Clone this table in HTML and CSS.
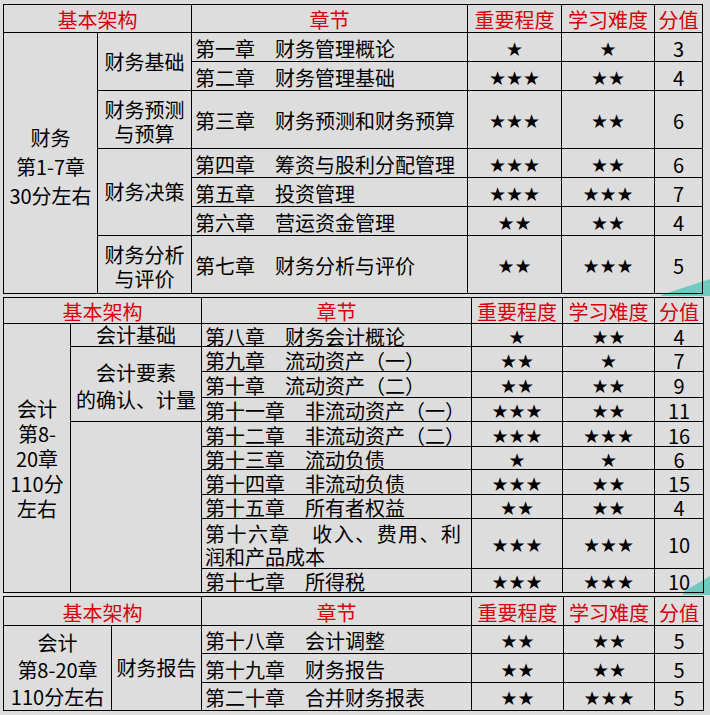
FILE: index.html
```html
<!DOCTYPE html>
<html lang="zh-CN">
<head>
<meta charset="utf-8">
<title>财务管理 / 会计 章节分值</title>
<link rel="stylesheet" href="styles.css">
</head>
<body>
<div class="page">
  <svg class="deco" width="710" height="715" viewBox="0 0 710 715" aria-hidden="true">
    <polygon points="661,295 710,279 710,296 661,296" fill="#6fcbbf"/>
    <polygon points="683,592 710,576 710,595 683,595" fill="#6fcbbf"/>
  </svg>

  <table class="tbl t1">
    <colgroup>
      <col class="c94"><col class="c94"><col class="c276"><col class="c94"><col class="c93"><col class="c48">
    </colgroup>
    <tr class="h28 head">
      <td colspan="2">基本架构</td><td>章节</td><td>重要程度</td><td>学习难度</td><td>分值</td>
    </tr>
    <tr class="h29">
      <td rowspan="7" class="grp l29">财务<br>第1-7章<br>30分左右</td>
      <td rowspan="2" class="grp">财务基础</td>
      <td class="ch">第一章　财务管理概论</td><td class="st">★</td><td class="st">★</td><td class="num">3</td>
    </tr>
    <tr class="h29">
      <td class="ch">第二章　财务管理基础</td><td class="st">★★★</td><td class="st">★★</td><td class="num">4</td>
    </tr>
    <tr class="h58">
      <td class="grp l24">财务预测<br>与预算</td>
      <td class="ch">第三章　财务预测和财务预算</td><td class="st">★★★</td><td class="st">★★</td><td class="num">6</td>
    </tr>
    <tr class="h29">
      <td rowspan="3" class="grp">财务决策</td>
      <td class="ch">第四章　筹资与股利分配管理</td><td class="st">★★★</td><td class="st">★★</td><td class="num">6</td>
    </tr>
    <tr class="h29">
      <td class="ch">第五章　投资管理</td><td class="st">★★★</td><td class="st">★★★</td><td class="num">7</td>
    </tr>
    <tr class="h29">
      <td class="ch">第六章　营运资金管理</td><td class="st">★★</td><td class="st">★★</td><td class="num">4</td>
    </tr>
    <tr class="h58">
      <td class="grp l24">财务分析<br>与评价</td>
      <td class="ch">第七章　财务分析与评价</td><td class="st">★★</td><td class="st">★★★</td><td class="num">5</td>
    </tr>
  </table>

  <table class="tbl t2">
    <colgroup>
      <col class="c67"><col class="c131"><col class="c270"><col class="c91"><col class="c92"><col class="c49">
    </colgroup>
    <tr class="h26 head">
      <td colspan="2">基本架构</td><td>章节</td><td>重要程度</td><td>学习难度</td><td>分值</td>
    </tr>
    <tr class="h23">
      <td rowspan="10" class="grp l25">会计<br>第8-<br>20章<br>110分<br>左右</td>
      <td class="grp">会计基础</td>
      <td class="ch">第八章　财务会计概论</td><td class="st">★</td><td class="st">★★</td><td class="num">4</td>
    </tr>
    <tr class="h25">
      <td rowspan="3" class="grp l27">会计要素<br>的确认、计量</td>
      <td class="ch">第九章　流动资产（一）</td><td class="st">★★</td><td class="st">★</td><td class="num">7</td>
    </tr>
    <tr class="h26">
      <td class="ch">第十章　流动资产（二）</td><td class="st">★★</td><td class="st">★★</td><td class="num">9</td>
    </tr>
    <tr class="h24">
      <td class="ch">第十一章　非流动资产（一）</td><td class="st">★★★</td><td class="st">★★</td><td class="num">11</td>
    </tr>
    <tr class="h25">
      <td rowspan="6" class="grp"></td>
      <td class="ch">第十二章　非流动资产（二）</td><td class="st">★★★</td><td class="st">★★★</td><td class="num">16</td>
    </tr>
    <tr class="h23">
      <td class="ch">第十三章　流动负债</td><td class="st">★</td><td class="st">★</td><td class="num">6</td>
    </tr>
    <tr class="h25">
      <td class="ch">第十四章　非流动负债</td><td class="st">★★★</td><td class="st">★★</td><td class="num">15</td>
    </tr>
    <tr class="h24">
      <td class="ch">第十五章　所有者权益</td><td class="st">★★</td><td class="st">★★</td><td class="num">4</td>
    </tr>
    <tr class="h50">
      <td class="ch wrap">第十六章　收入、费用、利润和产品成本</td><td class="st">★★★</td><td class="st">★★★</td><td class="num">10</td>
    </tr>
    <tr class="h24">
      <td class="ch">第十七章　所得税</td><td class="st">★★★</td><td class="st">★★★</td><td class="num">10</td>
    </tr>
  </table>

  <table class="tbl t3">
    <colgroup>
      <col class="c108"><col class="c90"><col class="c270"><col class="c92"><col class="c91"><col class="c49">
    </colgroup>
    <tr class="h29 head">
      <td colspan="2">基本架构</td><td>章节</td><td>重要程度</td><td>学习难度</td><td>分值</td>
    </tr>
    <tr class="h28">
      <td rowspan="3" class="grp l27">会计<br>第8-20章<br>110分左右</td>
      <td rowspan="3" class="grp">财务报告</td>
      <td class="ch">第十八章　会计调整</td><td class="st">★★</td><td class="st">★★</td><td class="num">5</td>
    </tr>
    <tr class="h29">
      <td class="ch">第十九章　财务报告</td><td class="st">★★</td><td class="st">★★</td><td class="num">5</td>
    </tr>
    <tr class="h28">
      <td class="ch">第二十章　合并财务报表</td><td class="st">★★</td><td class="st">★★★</td><td class="num">5</td>
    </tr>
  </table>
</div>
</body>
</html>
```

FILE: styles.css
```css
html, body {
  margin: 0;
  padding: 0;
  background: #dddddd;
}

.page {
  position: relative;
  width: 710px;
  height: 715px;
  padding: 4px 0 0 3px;
  box-sizing: border-box;
  display: flex;
  flex-direction: column;
  gap: 3px;
  font-family: "Noto Sans CJK SC", "Noto Sans", sans-serif;
  font-size: 20px;
  color: #000;
  overflow: hidden;
}

.deco {
  position: absolute;
  left: 0;
  top: 0;
  z-index: 0;
}

.tbl {
  position: relative;
  z-index: 1;
  border-collapse: collapse;
  table-layout: fixed;
}

.t1 { width: 699px; }
.t2 { width: 700px; }
.t3 { width: 700px; }

.tbl td {
  border: 1px solid #000;
  padding: 3px 2px 0;
  line-height: 18px;
  text-align: center;
  vertical-align: middle;
  white-space: nowrap;
  overflow: visible;
}

.c48 { width: 48px; }
.c49 { width: 49px; }
.c67 { width: 67px; }
.c90 { width: 90px; }
.c91 { width: 91px; }
.c92 { width: 92px; }
.c93 { width: 93px; }
.c94 { width: 94px; }
.c108 { width: 108px; }
.c131 { width: 131px; }
.c270 { width: 270px; }
.c276 { width: 276px; }

.h23 { height: 23px; }
.h24 { height: 24px; }
.h25 { height: 25px; }
.h26 { height: 26px; }
.h28 { height: 28px; }
.h29 { height: 29px; }
.h50 { height: 50px; }
.h58 { height: 58px; }

.head td {
  color: #d8000a;
}

.tbl td.ch {
  text-align: left;
  padding-left: 3px;
}

.tbl td.wrap {
  white-space: normal;
  text-align: justify;
  line-height: 23px;
  padding-right: 10px;
}

.tbl td.grp {
  white-space: normal;
  padding-top: 0;
}

.tbl td.l24 { line-height: 24px; padding-top: 4px; }
.tbl td.l25 { line-height: 25px; }
.tbl td.l27 { line-height: 27px; padding-top: 3px; }
.tbl td.l29 { line-height: 29px; padding-top: 6px; }

.tbl td.st {
  font-family: "DejaVu Sans", sans-serif;
  font-size: 19px;
}
```
